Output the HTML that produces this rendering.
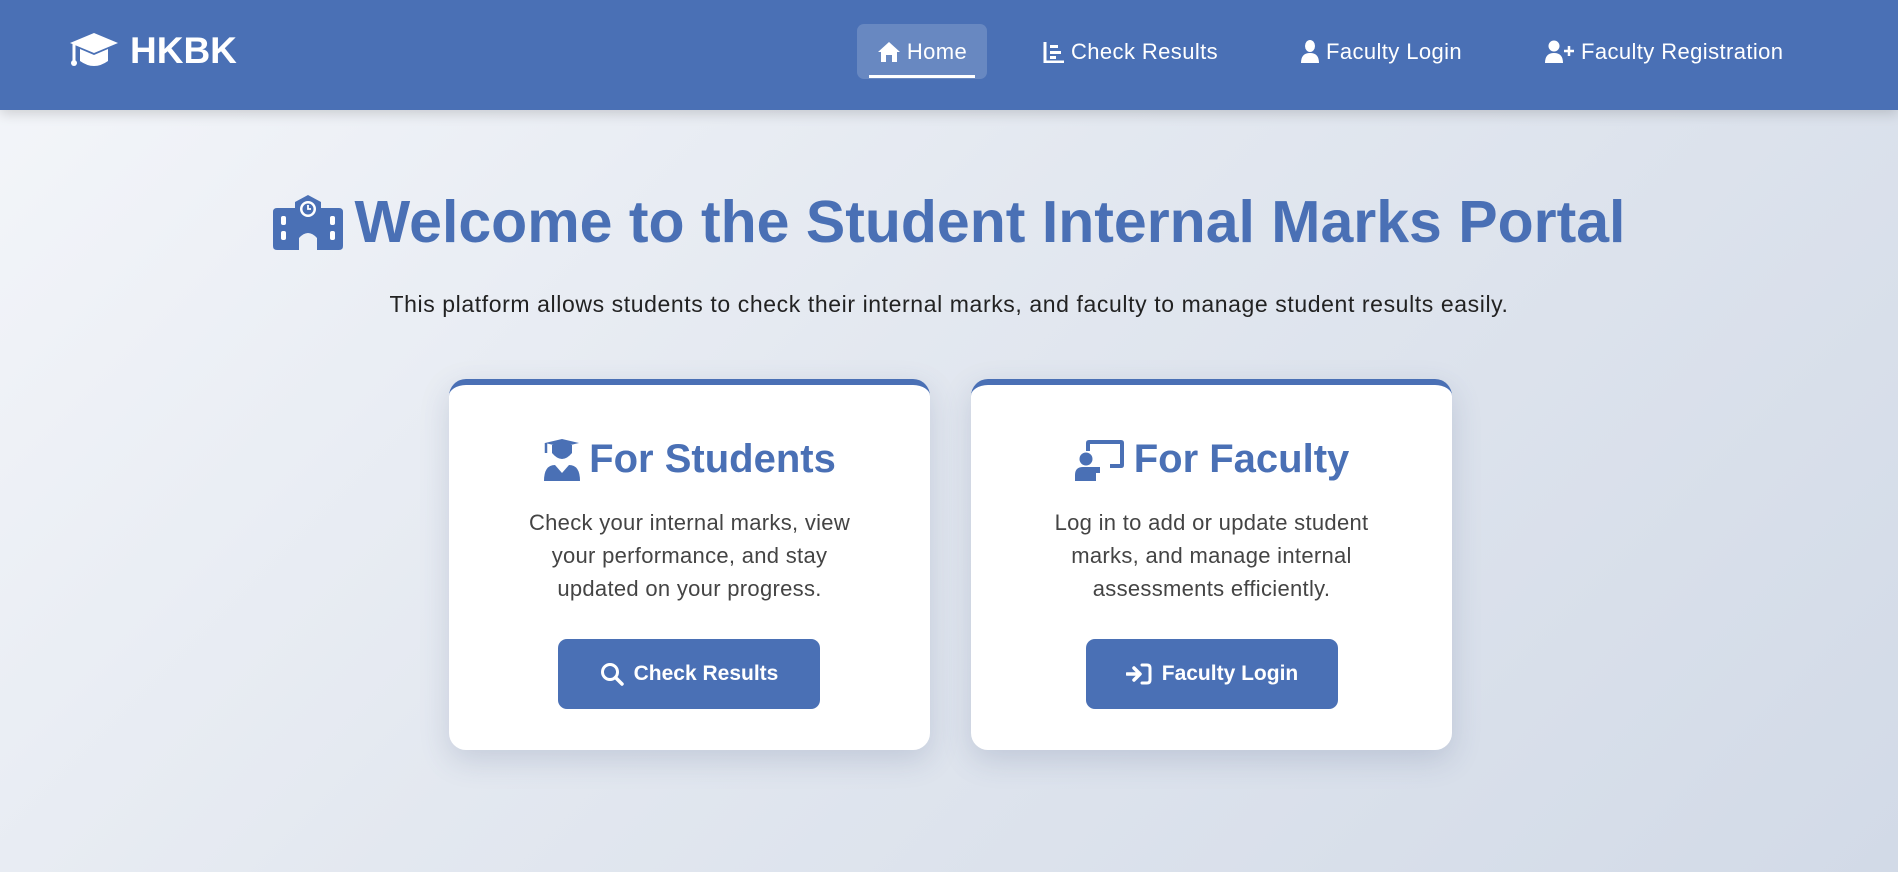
<!DOCTYPE html>
<html><head><meta charset="utf-8"><style>
*{margin:0;padding:0;box-sizing:border-box}
body{width:1898px;height:872px;overflow:hidden;font-family:"Liberation Sans",sans-serif;background:linear-gradient(135deg,#f4f6fa 0%,#e3e8f0 45%,#d2dae7 100%);position:relative}
nav{position:absolute;left:0;top:0;width:1898px;height:110px;background:#4a70b5;box-shadow:0 4px 12px rgba(0,0,0,.15)}
.logo{position:absolute;left:68px;top:30px;color:#fff;font-weight:bold;font-size:37px;display:flex;align-items:center;gap:10px}
.nl{position:absolute;top:24px;height:55px;color:#fff;font-size:22px;letter-spacing:0.4px;display:flex;align-items:center;gap:6px;white-space:nowrap}
.home{left:857px;width:130px;background:rgba(255,255,255,.17);border-radius:7px;justify-content:center}
.home:after{content:"";position:absolute;left:12px;right:12px;bottom:1px;height:3px;background:#fff}
h1{position:absolute;left:0;width:1898px;top:188px;text-align:center;color:#4a70b5;font-size:59px;font-weight:bold;display:flex;justify-content:center;align-items:center;gap:12px}
.sub{position:absolute;top:291px;width:1898px;text-align:center;font-size:23px;letter-spacing:0.6px;color:#222}
.card{position:absolute;top:379px;width:481px;height:371px;background:#fff;border-radius:17px;border-top:6px solid #4a70b5;box-shadow:0 10px 30px rgba(60,80,120,.18);text-align:center}
.card h2{margin-top:52px;color:#4a70b5;font-size:40px;display:flex;justify-content:center;align-items:center;gap:8px}
.card p{margin:24px auto 0;width:350px;font-size:22px;letter-spacing:0.3px;line-height:33px;color:#444}
.btn{position:absolute;top:254px;height:70px;background:#4a70b5;border-radius:9px;color:#fff;font-weight:bold;font-size:21px;display:flex;align-items:center;justify-content:center;gap:10px}
</style></head><body>
<nav>
<div class="logo"><svg width="52" height="40" viewBox="0 0 52 40"><path d="M26 2 L50 12 L26 22 L2 12Z" fill="#fff"/><path d="M12 18 V30 Q26 40 40 30 V18 L26 24Z" fill="#fff"/><path d="M6 13 V30" stroke="#fff" stroke-width="3"/><circle cx="6" cy="32" r="3" fill="#fff"/></svg>HKBK</div>
<div class="nl home"><svg width="24" height="22" viewBox="0 0 24 22"><path d="M12 1 L23 11 H20 V21 H15 V14 H9 V21 H4 V11 H1Z" fill="#fff"/></svg>Home</div>
<div class="nl" style="left:1043px"><svg width="22" height="22" viewBox="0 0 22 22"><path d="M2 1V21H21" stroke="#fff" stroke-width="3" fill="none"/><rect x="7" y="4" width="8" height="3" fill="#fff"/><rect x="7" y="10" width="11" height="3" fill="#fff"/><rect x="7" y="15" width="6" height="3" fill="#fff"/></svg>Check Results</div>
<div class="nl" style="left:1300px"><svg width="20" height="24" viewBox="0 0 20 24"><ellipse cx="10" cy="6" rx="5" ry="6" fill="#fff"/><path d="M1 23 Q1 13 10 13 Q19 13 19 23Z" fill="#fff"/></svg>Faculty Login</div>
<div class="nl" style="left:1545px"><svg width="30" height="24" viewBox="0 0 30 24"><circle cx="9" cy="6" r="5.5" fill="#fff"/><path d="M0 23 Q0 13 9 13 Q18 13 18 23Z" fill="#fff"/><path d="M24 6V16M19 11H29" stroke="#fff" stroke-width="2.5"/></svg>Faculty Registration</div>
</nav>
<h1><svg width="70" height="56" viewBox="0 0 70 56"><path d="M4 14 H22 V8 L35 1 L48 8 V14 H66 Q70 14 70 18 V52 Q70 56 66 56 H44 V44 Q35 34 26 44 V56 H4 Q0 56 0 52 V18 Q0 14 4 14Z" fill="#4a70b5"/><circle cx="35" cy="15" r="8" fill="#fff"/><circle cx="35" cy="15" r="5.5" fill="#4a70b5"/><path d="M35 11V15H38" stroke="#fff" stroke-width="1.8" fill="none"/><g fill="#fff"><rect x="8" y="22" width="5" height="9" rx="2"/><rect x="8" y="37" width="5" height="9" rx="2"/><rect x="57" y="22" width="5" height="9" rx="2"/><rect x="57" y="37" width="5" height="9" rx="2"/></g></svg>Welcome to the Student Internal Marks Portal</h1>
<div class="sub">This platform allows students to check their internal marks, and faculty to manage student results easily.</div>
<div class="card" style="left:449px">
<h2><svg width="38" height="42" viewBox="0 0 38 42"><path d="M2 4 L19 0 L36 4 L19 8Z" fill="#4a70b5"/><path d="M9 6 V14 Q19 26 29 14 V6Z" fill="#4a70b5"/><path d="M3 4V14" stroke="#4a70b5" stroke-width="2.5"/><path d="M1 42 Q1 26 12 26 L19 34 L26 26 Q37 26 37 42Z" fill="#4a70b5"/></svg>For Students</h2>
<p>Check your internal marks, view your performance, and stay updated on your progress.</p>
<div class="btn" style="left:109px;width:262px"><svg width="24" height="24" viewBox="0 0 24 24"><circle cx="10" cy="10" r="7.5" stroke="#fff" stroke-width="3" fill="none"/><path d="M15.5 15.5L22 22" stroke="#fff" stroke-width="3.5" stroke-linecap="round"/></svg>Check Results</div>
</div>
<div class="card" style="left:971px">
<h2><svg width="52" height="42" viewBox="0 0 52 42"><path d="M12 4 Q12 1 15 1 H47 Q50 1 50 4 V26 Q50 29 47 29 H36 V25 H46 V5 H16 V12 H12Z" fill="#4a70b5"/><circle cx="12" cy="20" r="6.5" fill="#4a70b5"/><path d="M1 42 V36 Q1 28 9 28 H26 V34 H22 V42Z" fill="#4a70b5"/></svg>For Faculty</h2>
<p>Log in to add or update student marks, and manage internal assessments efficiently.</p>
<div class="btn" style="left:115px;width:252px"><svg width="26" height="22" viewBox="0 0 26 22"><path d="M1 11H12M8 5L14 11L8 17" stroke="#fff" stroke-width="3.5" fill="none" stroke-linecap="round" stroke-linejoin="round"/><path d="M16 2H21Q24 2 24 5V17Q24 20 21 20H16" stroke="#fff" stroke-width="3" fill="none" stroke-linecap="round"/></svg>Faculty Login</div>
</div>
</body></html>
